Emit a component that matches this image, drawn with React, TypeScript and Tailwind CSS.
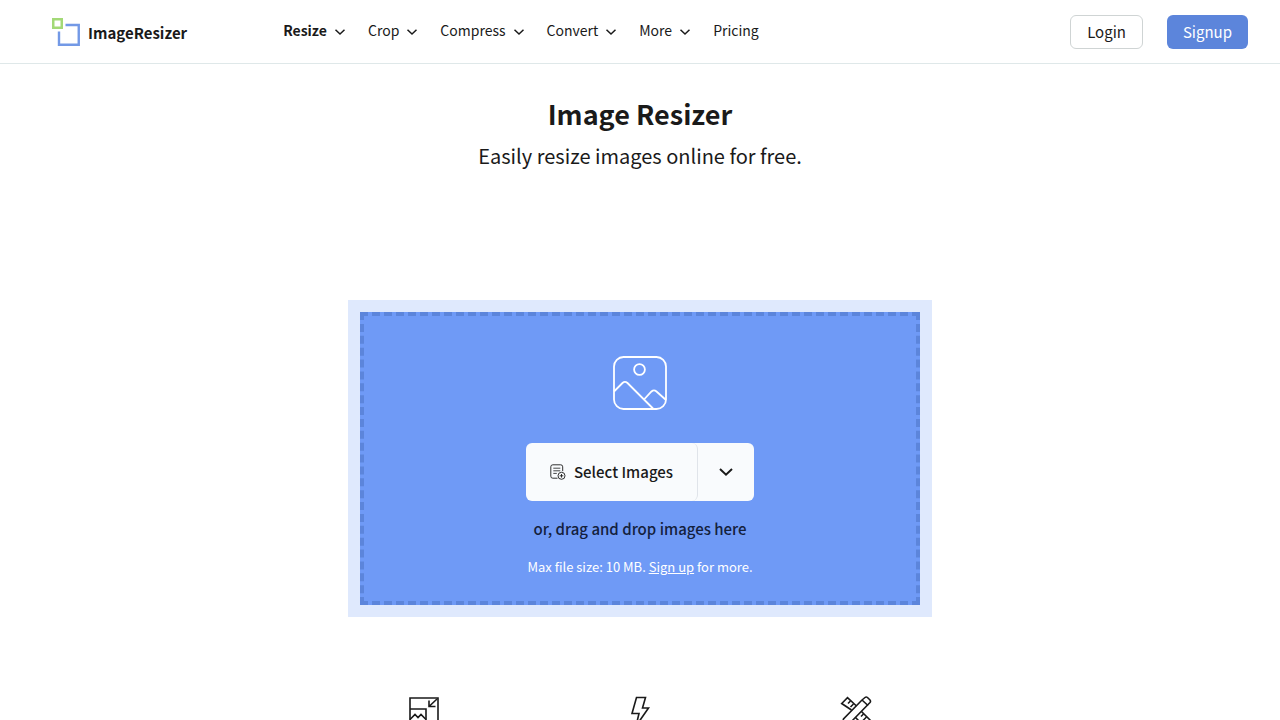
import React from 'react';

const navItems = [
  { label: 'Resize', menu: true, active: true },
  { label: 'Crop', menu: true },
  { label: 'Compress', menu: true },
  { label: 'Convert', menu: true },
  { label: 'More', menu: true },
  { label: 'Pricing', menu: false },
];

const Logo = () => (
  <a href="#" className="flex items-center gap-2">
    <svg width="28" height="28" viewBox="0 0 28 28" fill="none" aria-hidden="true">
      <rect x="1.25" y="1.25" width="8.5" height="8.5" stroke="#a3d977" strokeWidth="2.5" />
      <path d="M13.5 7H26.75V26.75H7V13.5" stroke="#7399e6" strokeWidth="2.4" />
    </svg>
    <span className="pt-0.5 text-[15px] font-bold leading-6">ImageResizer</span>
  </a>
);

const Chevron = ({ className }: { className: string }) => (
  <svg className={className} viewBox="0 0 12 12" fill="none" aria-hidden="true">
    <path d="M1.500 3.800L6 8 10.500 3.800" stroke="currentColor" strokeWidth="1.500" />
  </svg>
);

const PictureIcon = () => (
  <svg width="54" height="54" viewBox="0 0 54 54" fill="none" stroke="#fff" strokeWidth="1.8" aria-hidden="true">
    <rect x="1" y="1" width="52" height="52" rx="9.5" />
    <circle cx="26.5" cy="13.5" r="5.4" />
    <path d="M1 35.5L9.5 27c1.6-1.5 3.3-1.5 5 0L40 52.5" />
    <path d="M31 43.500L38.500 35.500c1.600-1.500 3.300-1.500 5 0L53 44" />
  </svg>
);

const AddFileIcon = () => (
  <svg width="16" height="16" viewBox="0 0 16 16" fill="none" stroke="currentColor" strokeWidth="0.9" aria-hidden="true">
    <path d="M7.500 14.200H2.800a2 2 0 0 1-2-2V2.800a2 2 0 0 1 2-2h7.900a2 2 0 0 1 2 2v4.400" />
    <path d="M3.300 4.200h7M3.300 6.800h7M3.300 9.400h3.500" strokeWidth="0.8" />
    <circle cx="11.500" cy="11.800" r="3.500" />
    <path d="M11.500 10v3.600M9.700 11.800h3.600" />
  </svg>
);

const features = [
  {
    name: 'Resize',
    icon: (
      <>
        <path d="M2 2h28v28H2zM2 13h16v17" />
        <path d="M2 23.500l5-5 3 3 3-3 5 5" />
        <path d="M29 3l-8 7.500M21 4.500v6h6.500" />
      </>
    ),
  },
  {
    name: 'Fast',
    icon: <path d="M12.500 1.500h9l-3 10.500h6L12 30l3-12.500H8z" />,
  },
  {
    name: 'Tools',
    icon: (
      <>
        <path d="M22 4l3-2.500a2 2 0 0 1 2.500 0l2.500 2.500a2 2 0 0 1 0 2.500L8.500 28.500l-7 2 2-7.500z" />
        <path d="M22 4l6 5.500" />
        <path d="M11.500 14L1.700 7.500 7.500 1.700 16.500 10M21.500 15.500l9 9-6 6-9-9" />
        <path d="M10.500 5l-2.500 2.500M13.500 8l-3 3M23.500 18l-2.500 2.500M26.500 21l-3.500 3.500" />
      </>
    ),
  },
];

const App = () => {
  return (
    <div className="min-h-screen bg-white font-['Noto_Sans_CJK_SC','Noto_Sans',sans-serif] text-[#1a1a1a]">
      <header className="flex h-16 items-center border-b border-[#dfe8e9] pl-13 pr-8">
        <Logo />
        <nav className="ml-24 flex items-center gap-[22px]">
          {navItems.map((item) =>
            item.menu ? (
              <button
                key={item.label}
                className={
                  item.active ? 'flex items-center gap-[7px] text-sm font-bold' : 'flex items-center gap-[7px] text-sm'
                }
              >
                <span className="pb-1">{item.label}</span>
                <Chevron className="size-3" />
              </button>
            ) : (
              <a key={item.label} href="#" className="pb-1 text-sm">
                {item.label}
              </a>
            )
          )}
        </nav>
        <div className="ml-auto flex gap-6">
          <button className="h-[34px] rounded-md border border-[#cfd4d4] px-4 pt-0.5 text-[15px]">Login</button>
          <button className="h-[34px] rounded-md bg-[#5c85db] px-4 pt-0.5 text-[15px] text-white">Signup</button>
        </div>
      </header>

      <main className="flex flex-col items-center">
        <h1 className="mt-8 text-[27px] font-bold leading-9">Image Resizer</h1>
        <p className="mt-2 text-xl leading-8">Easily resize images online for free.</p>

        <section className="mt-32 w-full max-w-[584px] bg-[#dfe9fd] p-3">
          <div className="flex flex-col items-center border-4 border-dashed border-[#5c85db] bg-[#6f9af6] pt-10 pb-6">
            <PictureIcon />
            <div className="mt-[33px] flex h-[58px] rounded-md bg-[#f9fbfd]">
              <button className="flex items-center gap-2 rounded-md border-r border-[#e0e4ea] px-6 text-[15px] font-medium">
                <AddFileIcon />
                Select Images
              </button>
              <button aria-label="More sources" className="flex w-14 items-center justify-center">
                <Chevron className="size-4" />
              </button>
            </div>
            <p className="mt-4 text-[15px] font-medium leading-6 text-[#14213d]">or, drag and drop images here</p>
            <p className="mt-4 text-[13px] leading-5 text-white">
              Max file size: 10 MB. <a href="#" className="underline">Sign up</a> for more.
            </p>
          </div>
        </section>

        <section className="mt-[79px] grid w-full max-w-[648px] grid-cols-3 justify-items-center">
          {features.map((feature) => (
            <svg
              key={feature.name}
              width="32"
              height="32"
              viewBox="0 0 32 32"
              fill="none"
              stroke="currentColor"
              strokeWidth="1.6"
              role="img"
              aria-label={feature.name}
            >
              {feature.icon}
            </svg>
          ))}
        </section>
      </main>
    </div>
  );
};

export default App;
